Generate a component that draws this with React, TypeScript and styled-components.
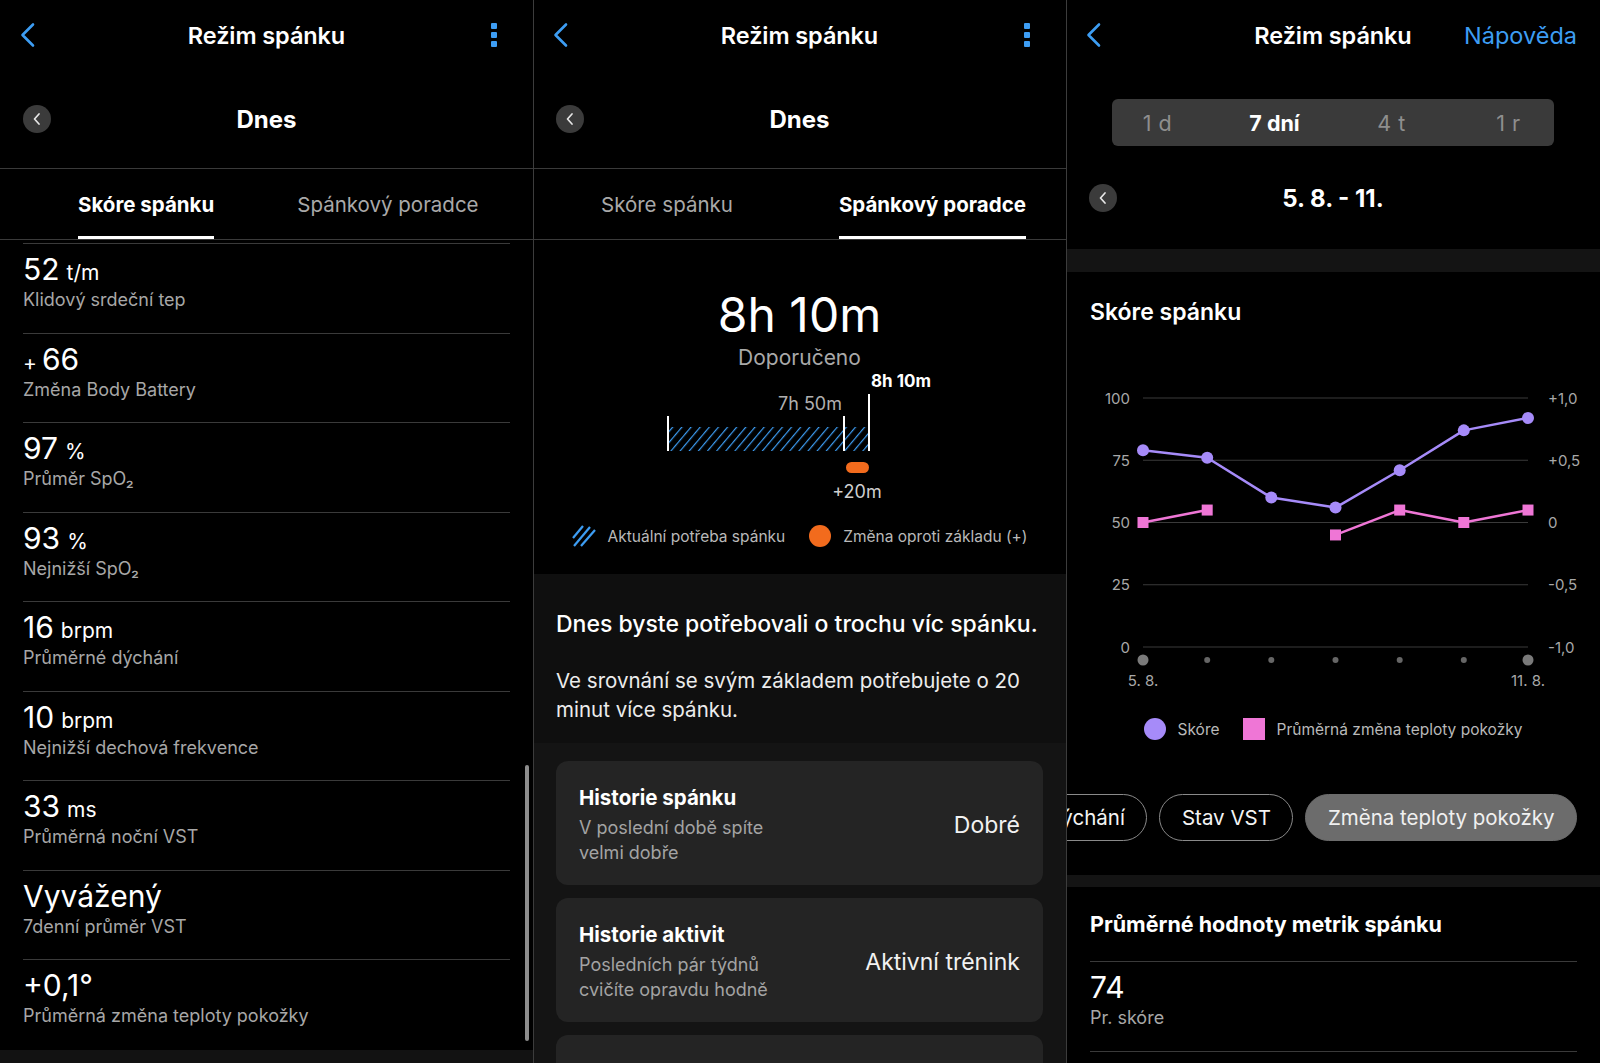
import React from "react";
import styled, { createGlobalStyle } from "styled-components";

const BLUE = "#3d9df3";
const ORANGE = "#f26b1d";
const PURPLE = "#a68bf9";
const PINK = "#ef76d6";

const GlobalStyle = createGlobalStyle`
  html, body { margin: 0; padding: 0; background: #000; }
  body {
    font-family: Inter, "Noto Sans", "Liberation Sans", sans-serif;
    color: #fff;
    -webkit-font-smoothing: antialiased;
  }
  * { box-sizing: border-box; }
`;

const Screen = styled.div`
  display: grid;
  grid-template-columns: 533px 533px 534px;
  width: 1600px;
  height: 1063px;
  overflow: hidden;
  background: #000;
`;

const Panel = styled.section<{ $divider?: boolean }>`
  position: relative;
  display: flex;
  flex-direction: column;
  height: 1063px;
  overflow: hidden;
  &::before {
    content: "";
    display: ${(p) => (p.$divider ? "block" : "none")};
    position: absolute;
    left: 0;
    top: 0;
    bottom: 0;
    width: 1px;
    background: #3c3c3c;
    z-index: 2;
  }
`;

const TopBar = styled.header`
  display: grid;
  grid-template-columns: 1fr auto 1fr;
  align-items: center;
  height: 70px;
  padding: 0 20px;
  flex-shrink: 0;
`;

const BackLink = styled.span`
  justify-self: start;
  display: flex;
  align-items: center;
`;

const Title = styled.h1`
  margin: 0;
  font-size: 23.5px;
  font-weight: 600;
  letter-spacing: -0.1px;
`;

const RightSlot = styled.span<{ $offset?: number }>`
  justify-self: end;
  margin-right: ${(p) => p.$offset ?? 0}px;
`;

const HelpLink = styled.span`
  font-size: 23.5px;
  color: ${BLUE};
`;

const Kebab = styled.span`
  display: flex;
  flex-direction: column;
  gap: 3px;
`;

const KebabDot = styled.span`
  width: 6px;
  height: 6px;
  border-radius: 1px;
  background: ${BLUE};
`;

const DateRow = styled.div<{ $height: number; $border?: boolean; $mt?: number }>`
  display: grid;
  grid-template-columns: 1fr auto 1fr;
  align-items: center;
  height: ${(p) => p.$height}px;
  margin-top: ${(p) => p.$mt ?? 0}px;
  padding: 0 23px;
  border-bottom: ${(p) => (p.$border ? "1px solid #3a3a3a" : "none")};
  flex-shrink: 0;
`;

const CircleButton = styled.span`
  justify-self: start;
  width: 28px;
  height: 28px;
  border-radius: 50%;
  background: #3b3b3b;
  display: flex;
  align-items: center;
  justify-content: center;
`;

const DateText = styled.span`
  font-size: 24px;
  font-weight: 700;
`;

const TabStrip = styled.nav<{ $pad: number; $gap: number }>`
  display: flex;
  height: 71px;
  padding-left: ${(p) => p.$pad}px;
  gap: ${(p) => p.$gap}px;
  border-bottom: 1px solid #3a3a3a;
  flex-shrink: 0;
`;

const Tab = styled.span<{ $active?: boolean }>`
  display: flex;
  align-items: center;
  padding-top: 3px;
  font-size: 20.5px;
  font-weight: ${(p) => (p.$active ? 700 : 400)};
  color: ${(p) => (p.$active ? "#fff" : "#a9a9a9")};
  border-bottom: 3px solid ${(p) => (p.$active ? "#fff" : "transparent")};
  white-space: nowrap;
`;

/* ---------- metric rows ---------- */

const MetricList = styled.div`
  flex: 1;
  overflow: hidden;
  padding-top: 3px;
`;

const MetricRow = styled.div`
  margin: 0 23px;
  border-top: 1px solid #3a3a3a;
  padding: 7px 0 21.5px;
`;

const MetricValue = styled.div`
  height: 36px;
  line-height: 36px;
  font-size: 30px;
  font-weight: 400;
  white-space: nowrap;
`;

const MetricPrefix = styled.span`
  font-size: 21px;
  margin-right: 5px;
`;

const MetricUnit = styled.span`
  font-size: 21px;
  margin-left: 7px;
`;

const MetricLabel = styled.div`
  margin-top: 2px;
  height: 22px;
  line-height: 22px;
  font-size: 18px;
  color: #a7a7a7;
  white-space: nowrap;
`;

const BottomBand = styled.div`
  height: 13px;
  background: #121212;
  flex-shrink: 0;
`;

const ScrollThumb = styled.div`
  position: absolute;
  right: 4px;
  top: 765px;
  width: 4px;
  height: 276px;
  border-radius: 2px;
  background: #8d8d8d;
`;

/* ---------- panel 2 ---------- */

const Hero = styled.div`
  display: flex;
  flex-direction: column;
  align-items: center;
  flex-shrink: 0;
`;

const HeroValue = styled.div`
  margin-top: 47px;
  height: 56px;
  line-height: 56px;
  font-size: 48px;
  font-weight: 400;
`;

const HeroCaption = styled.div`
  margin-top: 2px;
  height: 26px;
  line-height: 26px;
  font-size: 21px;
  color: #a9a9a9;
`;

const NeedChart = styled.svg`
  display: block;
  margin-top: -7px;
  flex-shrink: 0;
`;

const Legend = styled.div<{ $mt: number; $gap: number }>`
  display: flex;
  justify-content: center;
  align-items: center;
  gap: ${(p) => p.$gap}px;
  height: 24px;
  margin-top: ${(p) => p.$mt}px;
  flex-shrink: 0;
`;

const LegendItem = styled.span`
  display: flex;
  align-items: center;
  gap: 12px;
  font-size: 15.5px;
  color: #b9b9b9;
  white-space: nowrap;
`;

const LegendDot = styled.span<{ $color: string; $size: number; $square?: boolean }>`
  width: ${(p) => p.$size}px;
  height: ${(p) => p.$size}px;
  border-radius: ${(p) => (p.$square ? "0" : "50%")};
  background: ${(p) => p.$color};
`;

const AdviceSection = styled.div`
  margin-top: 26px;
  background: #0f0f0f;
  padding: 36px 23px 19px;
  flex-shrink: 0;
`;

const AdviceHeading = styled.h2`
  margin: 0;
  font-size: 23px;
  line-height: 28px;
  font-weight: 500;
  white-space: nowrap;
`;

const AdviceText = styled.p`
  margin: 28px 0 0;
  font-size: 20.5px;
  line-height: 29px;
  color: #ececec;
`;

const CardArea = styled.div`
  flex: 1;
  background: #141414;
  padding: 18px 23px 0;
  display: flex;
  flex-direction: column;
  gap: 13px;
`;

const Card = styled.div`
  flex-shrink: 0;
  height: 124px;
  border-radius: 12px;
  background: #242424;
  display: flex;
  align-items: center;
  justify-content: space-between;
  padding: 3px 23px 0;
`;

const CardText = styled.div`
  display: flex;
  flex-direction: column;
`;

const CardTitle = styled.div`
  font-size: 20.5px;
  line-height: 26px;
  font-weight: 700;
`;

const CardSub = styled.div`
  margin-top: 4px;
  font-size: 18px;
  line-height: 25px;
  color: #a3a3a3;
`;

const CardValue = styled.div`
  font-size: 23px;
  color: #f2f2f2;
`;

/* ---------- panel 3 ---------- */

const Segmented = styled.div`
  display: flex;
  justify-content: center;
  margin: 29px 46px 0;
  height: 47px;
  border-radius: 6px;
  background: #3a3a3a;
  overflow: hidden;
  flex-shrink: 0;
`;

const Segment = styled.span<{ $active?: boolean }>`
  flex: 0 0 117px;
  display: flex;
  align-items: center;
  justify-content: center;
  font-size: 21.5px;
  font-weight: ${(p) => (p.$active ? 700 : 400)};
  color: ${(p) => (p.$active ? "#fff" : "#8e8e8e")};
  letter-spacing: ${(p) => (p.$active ? "0" : "0.5px")};
`;

const Band = styled.div<{ $h: number; $mt?: number }>`
  height: ${(p) => p.$h}px;
  margin-top: ${(p) => p.$mt ?? 0}px;
  background: #141414;
  flex-shrink: 0;
`;

const SectionTitle = styled.h2<{ $size: number; $weight: number; $mt: number }>`
  margin: ${(p) => p.$mt}px 0 0;
  padding: 0 24px;
  font-size: ${(p) => p.$size}px;
  font-weight: ${(p) => p.$weight};
  line-height: 28px;
  white-space: nowrap;
  flex-shrink: 0;
`;

const ScoreChart = styled.svg`
  display: block;
  margin-top: 44px;
  flex-shrink: 0;
`;

const ChipRow = styled.div`
  display: flex;
  justify-content: flex-end;
  gap: 12px;
  margin-top: 53px;
  padding-right: 23px;
  overflow: hidden;
  flex-shrink: 0;
`;

const Chip = styled.span<{ $active?: boolean }>`
  flex-shrink: 0;
  height: 47px;
  display: flex;
  align-items: center;
  padding: 0 21.5px;
  border-radius: 24px;
  border: 1.5px solid ${(p) => (p.$active ? "#6c6c6c" : "#8a8a8a")};
  background: ${(p) => (p.$active ? "#6c6c6c" : "transparent")};
  font-size: 20.5px;
  color: ${(p) => (p.$active ? "#f0f0f0" : "#f4f4f4")};
  white-space: nowrap;
`;

const AverageList = styled.div`
  padding-left: 1px;
  margin-top: 23px;
`;

/* ---------- icons ---------- */

const Chevron = () => (
  <svg width="16" height="26" viewBox="0 0 16 26">
    <polyline
      points="13,2.5 2.5,13 13,23.5"
      fill="none"
      stroke={BLUE}
      strokeWidth="2.6"
      strokeLinecap="round"
      strokeLinejoin="round"
    />
  </svg>
);

const SmallChevron = () => (
  <svg width="10" height="14" viewBox="0 0 10 14">
    <polyline
      points="7,2 2.5,7 7,12"
      fill="none"
      stroke="#e6e6e6"
      strokeWidth="1.7"
      strokeLinecap="round"
      strokeLinejoin="round"
    />
  </svg>
);

const KebabIcon = () => (
  <Kebab>
    <KebabDot />
    <KebabDot />
    <KebabDot />
  </Kebab>
);

const HatchIcon = () => (
  <svg width="24" height="22" viewBox="0 0 24 22">
    <g stroke={BLUE} strokeWidth="2.2" strokeLinecap="butt">
      <line x1="1" y1="13" x2="11" y2="1" />
      <line x1="2" y1="21" x2="18" y2="2" />
      <line x1="9" y1="21" x2="23" y2="5" />
    </g>
  </svg>
);

/* ---------- shared header parts ---------- */

const Header = ({ right }: { right: React.ReactNode }) => (
  <TopBar>
    <BackLink>
      <Chevron />
    </BackLink>
    <Title>Režim spánku</Title>
    {right}
  </TopBar>
);

const DayHeader = () => (
  <DateRow $height={99} $border>
    <CircleButton>
      <SmallChevron />
    </CircleButton>
    <DateText>Dnes</DateText>
    <span />
  </DateRow>
);

/* ---------- data ---------- */

type Metric = { prefix?: string; value: string; unit?: string; label: string };

const metrics: Metric[] = [
  { value: "52", unit: "t/m", label: "Klidový srdeční tep" },
  { prefix: "+", value: "66", label: "Změna Body Battery" },
  { value: "97", unit: "%", label: "Průměr SpO₂" },
  { value: "93", unit: "%", label: "Nejnižší SpO₂" },
  { value: "16", unit: "brpm", label: "Průměrné dýchání" },
  { value: "10", unit: "brpm", label: "Nejnižší dechová frekvence" },
  { value: "33", unit: "ms", label: "Průměrná noční VST" },
  { value: "Vyvážený", label: "7denní průměr VST" },
  { value: "+0,1°", label: "Průměrná změna teploty pokožky" },
];

const MetricItem = ({ m }: { m: Metric }) => (
  <MetricRow>
    <MetricValue>
      {m.prefix && <MetricPrefix>{m.prefix}</MetricPrefix>}
      {m.value}
      {m.unit && <MetricUnit>{m.unit}</MetricUnit>}
    </MetricValue>
    <MetricLabel>{m.label}</MetricLabel>
  </MetricRow>
);

const xs = [77, 141.2, 205.3, 269.5, 333.7, 397.8, 462];
const scores = [79, 76, 60, 56, 71, 87, 92];
const temps: (number | null)[] = [0, 0.1, null, -0.1, 0.1, 0, 0.1];
const gridY = [28, 90.25, 152.5, 214.75, 277];
const leftLabels = ["100", "75", "50", "25", "0"];
const rightLabels = ["+1,0", "+0,5", "0", "-0,5", "-1,0"];
const sy = (v: number) => 277 - v * 2.49;
const ty = (t: number) => 152.5 - t * 124.5;

const tempSegments = () => {
  const segs: string[] = [];
  for (let i = 0; i < temps.length - 1; i++) {
    const a = temps[i];
    const b = temps[i + 1];
    if (a !== null && b !== null) {
      segs.push(`M${xs[i]},${ty(a)} L${xs[i + 1]},${ty(b)}`);
    }
  }
  return segs.join(" ");
};

/* ---------- panels ---------- */

const ScorePanel = () => (
  <Panel>
    <Header
      right={
        <RightSlot $offset={16}>
          <KebabIcon />
        </RightSlot>
      }
    />
    <DayHeader />
    <TabStrip $pad={78} $gap={83}>
      <Tab $active>Skóre spánku</Tab>
      <Tab>Spánkový poradce</Tab>
    </TabStrip>
    <MetricList>
      {metrics.map((m) => (
        <MetricItem key={m.label} m={m} />
      ))}
    </MetricList>
    <BottomBand />
    <ScrollThumb />
  </Panel>
);

const CoachPanel = () => (
  <Panel $divider>
    <Header
      right={
        <RightSlot $offset={16}>
          <KebabIcon />
        </RightSlot>
      }
    />
    <DayHeader />
    <TabStrip $pad={68} $gap={106}>
      <Tab>Skóre spánku</Tab>
      <Tab $active>Spánkový poradce</Tab>
    </TabStrip>
    <Hero>
      <HeroValue>8h 10m</HeroValue>
      <HeroCaption>Doporučeno</HeroCaption>
    </Hero>
    <NeedChart width="533" height="140" viewBox="0 0 533 140">
      <defs>
        <pattern id="hatch" width="7" height="7" patternUnits="userSpaceOnUse" patternTransform="rotate(40)">
          <rect width="7" height="7" fill="#000" />
          <line x1="0" y1="0" x2="0" y2="7" stroke={BLUE} strokeWidth="2.4" />
        </pattern>
      </defs>
      <rect x="135" y="63" width="201" height="24" fill="url(#hatch)" />
      <rect x="134" y="52" width="2" height="35" fill="#fff" />
      <rect x="310" y="52" width="2" height="35" fill="#fff" />
      <rect x="335" y="30" width="2" height="57" fill="#fff" />
      <text x="338" y="22.5" fontSize="17" fontWeight="700" fill="#fff">
        8h 10m
      </text>
      <text x="309" y="45.5" fontSize="18" textAnchor="end" fill="#b0b0b0">
        7h 50m
      </text>
      <rect x="313" y="98" width="23" height="11" rx="5.5" fill={ORANGE} />
      <text x="324" y="133.5" fontSize="18" textAnchor="middle" fill="#cfcfcf">
        +20m
      </text>
    </NeedChart>
    <Legend $mt={20} $gap={24}>
      <LegendItem>
        <HatchIcon />
        Aktuální potřeba spánku
      </LegendItem>
      <LegendItem>
        <LegendDot $color={ORANGE} $size={22} />
        Změna oproti základu (+)
      </LegendItem>
    </Legend>
    <AdviceSection>
      <AdviceHeading>Dnes byste potřebovali o trochu víc spánku.</AdviceHeading>
      <AdviceText>Ve srovnání se svým základem potřebujete o 20 minut více spánku.</AdviceText>
    </AdviceSection>
    <CardArea>
      <Card>
        <CardText>
          <CardTitle>Historie spánku</CardTitle>
          <CardSub>
            V poslední době spíte
            <br />
            velmi dobře
          </CardSub>
        </CardText>
        <CardValue>Dobré</CardValue>
      </Card>
      <Card>
        <CardText>
          <CardTitle>Historie aktivit</CardTitle>
          <CardSub>
            Posledních pár týdnů
            <br />
            cvičíte opravdu hodně
          </CardSub>
        </CardText>
        <CardValue>Aktivní trénink</CardValue>
      </Card>
      <Card />
    </CardArea>
  </Panel>
);

const TrendPanel = () => (
  <Panel $divider>
    <Header
      right={
        <RightSlot $offset={3}>
          <HelpLink>Nápověda</HelpLink>
        </RightSlot>
      }
    />
    <Segmented>
      <Segment>1 d</Segment>
      <Segment $active>7 dní</Segment>
      <Segment>4 t</Segment>
      <Segment>1 r</Segment>
    </Segmented>
    <DateRow $height={52} $mt={26}>
      <CircleButton>
        <SmallChevron />
      </CircleButton>
      <DateText>5. 8. - 11.</DateText>
      <span />
    </DateRow>
    <Band $h={23} $mt={25} />
    <SectionTitle $size={23} $weight={600} $mt={26}>
      Skóre spánku
    </SectionTitle>
    <ScoreChart width="534" height="330" viewBox="0 0 534 330">
      {gridY.map((y, i) => (
        <g key={y}>
          <line x1="77" x2="462" y1={y} y2={y} stroke="#3a3a3a" strokeWidth="1" />
          <text x="64" y={y + 5.5} fontSize="15" textAnchor="end" fill="#a8a8a8">
            {leftLabels[i]}
          </text>
          <text x="482" y={y + 5.5} fontSize="15" fill="#a8a8a8">
            {rightLabels[i]}
          </text>
        </g>
      ))}
      <path d={tempSegments()} fill="none" stroke={PINK} strokeWidth="2.5" />
      {temps.map((t, i) =>
        t === null ? null : (
          <rect key={i} x={xs[i] - 5.5} y={ty(t) - 5.5} width="11" height="11" fill={PINK} />
        )
      )}
      <polyline
        points={scores.map((s, i) => `${xs[i]},${sy(s)}`).join(" ")}
        fill="none"
        stroke={PURPLE}
        strokeWidth="2.5"
        strokeLinejoin="round"
      />
      {scores.map((s, i) => (
        <circle key={i} cx={xs[i]} cy={sy(s)} r="6" fill={PURPLE} />
      ))}
      {xs.map((x, i) => (
        <circle
          key={x}
          cx={x}
          cy="290"
          r={i === 0 || i === xs.length - 1 ? 5.5 : 3}
          fill={i === 0 || i === xs.length - 1 ? "#7a7a7a" : "#666"}
        />
      ))}
      <text x="77" y="315.5" fontSize="15" textAnchor="middle" fill="#a8a8a8">
        5. 8.
      </text>
      <text x="462" y="315.5" fontSize="15" textAnchor="middle" fill="#a8a8a8">
        11. 8.
      </text>
    </ScoreChart>
    <Legend $mt={17} $gap={23}>
      <LegendItem>
        <LegendDot $color={PURPLE} $size={22} />
        Skóre
      </LegendItem>
      <LegendItem>
        <LegendDot $color={PINK} $size={22} $square />
        Průměrná změna teploty pokožky
      </LegendItem>
    </Legend>
    <ChipRow>
      <Chip>dýchání</Chip>
      <Chip>Stav VST</Chip>
      <Chip $active>Změna teploty pokožky</Chip>
    </ChipRow>
    <Band $h={12} $mt={34} />
    <SectionTitle $size={21.5} $weight={700} $mt={23}>
      Průměrné hodnoty metrik spánku
    </SectionTitle>
    <AverageList>
      <MetricRow>
        <MetricValue>74</MetricValue>
        <MetricLabel>Pr. skóre</MetricLabel>
      </MetricRow>
      <MetricRow />
    </AverageList>
  </Panel>
);

export default function App() {
  return (
    <>
      <GlobalStyle />
      <Screen>
        <ScorePanel />
        <CoachPanel />
        <TrendPanel />
      </Screen>
    </>
  );
}
